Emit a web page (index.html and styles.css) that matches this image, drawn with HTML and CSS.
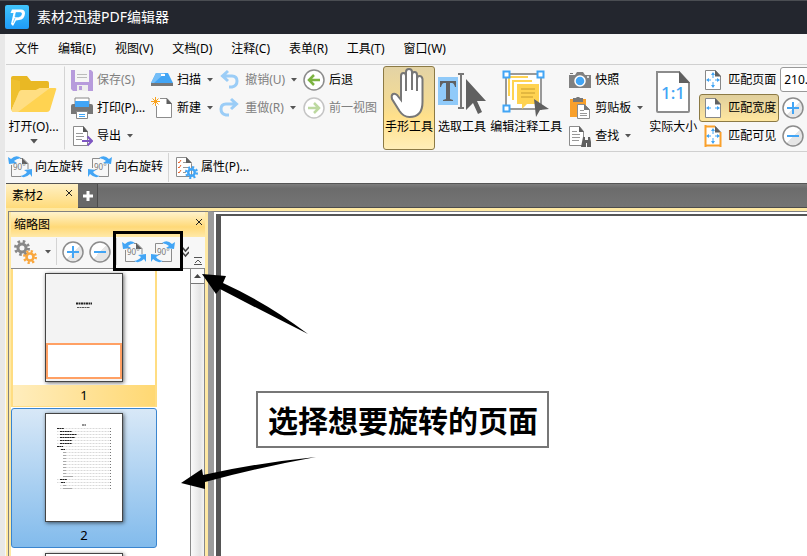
FILE: index.html
```html
<!DOCTYPE html>
<html lang="zh-CN">
<head>
    <meta charset="UTF-8">
    <meta name="viewport" content="width=device-width, initial-scale=1.0">
    <title>素材2迅捷PDF编辑器</title>
    <link rel="stylesheet" href="styles.css">
</head>
<body>
    <!-- Shared icons -->
    <svg class="sprite" aria-hidden="true">
        <symbol id="caret" viewBox="0 0 6 4"><path d="M0 0h6L3 3.6z" fill="currentColor"/></symbol>
        <symbol id="page" viewBox="0 0 18 22">
            <path d="M1.500 1.500h10l5 5.500v13.500h-15z" fill="#fff" stroke="#888"/>
            <path d="M11 1v6.500h6z" fill="#606060"/>
        </symbol>
        <symbol id="zoom-in" viewBox="0 0 22 22">
            <circle cx="11" cy="11" r="10" fill="url(#ring)" stroke="#8c8c8c" stroke-width="1.500"/>
            <path d="M5 11h12M11 5v12" stroke="#42a5f5" stroke-width="2"/>
        </symbol>
        <symbol id="zoom-out" viewBox="0 0 22 22">
            <circle cx="11" cy="11" r="10" fill="url(#ring)" stroke="#8c8c8c" stroke-width="1.500"/>
            <path d="M5 11h12" stroke="#42a5f5" stroke-width="2"/>
        </symbol>
        <symbol id="rotate-left" viewBox="0 0 24 24">
            <path d="M3.500 10v11.500H13M12 3.500h3l5 5V14" fill="none" stroke="#8c8c8c"/>
            <path d="M14 3v6h6z" fill="#606060"/>
            <text x="5" y="15" font-size="8" fill="#777">90°</text>
            <path d="M0 2l1 7 8-1-3-2q2-2 7-3Q8-1 3 4zM24 14l-8 1 3 2q-2 3-7 4 5 3 10-2l2 3z" fill="#42a5f5"/>
        </symbol>
        <symbol id="rotate-right" viewBox="0 0 24 24">
            <path d="M12 3.500H4.500V13M20.500 9v12.500H11" fill="none" stroke="#8c8c8c"/>
            <text x="6" y="15" font-size="8" fill="#777">90°</text>
            <path d="M24 2l-1 7-8-1 3-2q-2-2-7-3 5-4 10 1zM0 14l8 1-3 2q2 3 7 4-5 3-10-2l-2 3z" fill="#42a5f5"/>
        </symbol>
        <symbol id="gear" viewBox="0 0 16 16">
            <circle cx="8" cy="8" r="4" fill="none" stroke="currentColor" stroke-width="3"/>
            <circle cx="8" cy="8" r="6.500" fill="none" stroke="currentColor" stroke-width="3" stroke-dasharray="2.500 2.600"/>
        </symbol>
    </svg>

    <header class="titlebar">
        <svg class="logo" viewBox="0 0 24 24">
            <linearGradient id="logo-bg" x2="0" y2="1"><stop stop-color="#40c4fb"/><stop offset="1" stop-color="#1f9bf8"/></linearGradient>
            <linearGradient id="ring" x1="0" y1="0" x2="1" y2="1"><stop offset="0.5" stop-color="#fff"/><stop offset="0.5" stop-color="#e6e6e6"/></linearGradient>
            <rect width="24" height="24" rx="2" fill="url(#logo-bg)"/>
            <path d="M7 4.500h9q4 0 4 4-.500 6-6 6.500l-3 .500L8 21l-2-2 2.500-11H5.500z" fill="#fff"/>
            <path d="M11 7.500h4.500q1.500 0 1 2-.500 2-3 2.500H10zM10 13l-2 5" fill="#32b0fa" stroke="#32b0fa" stroke-width=".6"/>
        </svg>
        <span>素材2迅捷PDF编辑器</span>
    </header>

    <div class="app">
        <nav class="menubar">
            <button>文件</button>
            <button>编辑(E)</button>
            <button>视图(V)</button>
            <button>文档(D)</button>
            <button>注释(C)</button>
            <button>表单(R)</button>
            <button>工具(T)</button>
            <button>窗口(W)</button>
        </nav>

        <div class="toolbar">
            <button class="big open">
                <svg class="art" width="48" height="42" viewBox="0 0 48 42">
                    <path d="M1 5q0-2 2-2h14l4 5h16q2 0 2 2v18H1z" fill="#e9b824"/>
                    <path d="M1 6v32l9-20V8z" fill="#efc02f"/>
                    <path d="M9 19q1-2 3-2h14l4-2h15q2 0 1 2l-6 20q-1 2-3 2H4q-3 0-2-3z" fill="#ffd351"/>
                    <path d="M9 19q1-2 3-2h14l4-2h10L8 39H4q-3 0-2-3z" fill="#ffde82"/>
                </svg>
                <span>打开(O)...</span>
                <svg class="caret wide"><use href="#caret"/></svg>
            </button>
            <div class="column">
                <button class="tool" disabled>
                    <svg class="icon" viewBox="0 0 22 22">
                        <path d="M0 1h20l2 2v19H2l-2-2z" fill="#b79bdc"/>
                        <path d="M4 1h14v12H4z" fill="#f5f5f5"/><path d="M6 5.500h10M6 8.500h10" stroke="#bbb"/>
                        <path d="M6 16h11v6H6z" fill="#eee"/><path d="M8 17h3v4H8z" fill="#b79bdc"/>
                    </svg>
                    <span>保存(S)</span>
                </button>
                <button class="tool">
                    <svg class="icon" viewBox="0 0 22 22">
                        <path d="M4 1h14v8H4z" fill="#fff" stroke="#888"/>
                        <path d="M2 7h18q2 0 2 2v8H0V9q0-2 2-2z" fill="#777"/>
                        <path d="M4 4h14v6H4z" fill="#42a5f5"/>
                        <path d="M5.500 14.500h11v7h-11z" fill="#fff" stroke="#888"/><path d="M8 17.500h6M8 19.500h6" stroke="#42a5f5"/>
                    </svg>
                    <span>打印(P)...</span>
                </button>
                <button class="tool">
                    <svg class="icon" viewBox="0 0 22 22">
                        <path d="M2.500 1.500h10l4 5v14h-14z" fill="#fff" stroke="#8c8c8c"/><path d="M12 1v6h5z" fill="#555"/>
                        <path d="M5 8.500h7M5 11.500h8M5 14.500h6" stroke="#999"/>
                        <path d="M11 16h9M16.500 11.500L21 16l-4.500 4.500" fill="none" stroke="#7e57c2" stroke-width="2"/>
                    </svg>
                    <span>导出</span><svg class="caret"><use href="#caret"/></svg>
                </button>
            </div>
            <div class="column">
                <button class="tool">
                    <svg class="icon" viewBox="0 0 22 22">
                        <path d="M5 4h12l5 10H0z" fill="#42a5f5"/><path d="M5 4h9L3 14H0z" fill="#74bef8"/>
                        <path d="M10 5h4v2h-4z" fill="#fff"/><path d="M0 14h22v3H0z" fill="#777"/>
                    </svg>
                    <span>扫描</span><svg class="caret"><use href="#caret"/></svg>
                </button>
                <button class="tool">
                    <svg class="icon" viewBox="0 0 22 22">
                        <path d="M9 1.500h7l4.500 5v14h-15V9" fill="#fff" stroke="#8c8c8c"/><path d="M15.500 1v6H21z" fill="#606060"/>
                        <path d="M4.500 0v9M0 4.500h9M1.500 1.500l6 6M7.500 1.500l-6 6" stroke="#f9a11b"/>
                    </svg>
                    <span>新建</span><svg class="caret"><use href="#caret"/></svg>
                </button>
            </div>
            <div class="column">
                <button class="tool" disabled>
                    <svg class="icon" viewBox="0 0 22 22">
                        <path d="M3 7h10q5 0 5 5t-5 6h-3M9 2L3.500 7 9 12" fill="none" stroke="#9bcdf7" stroke-width="3"/>
                    </svg>
                    <span>撤销(U)</span><svg class="caret"><use href="#caret"/></svg>
                </button>
                <button class="tool" disabled>
                    <svg class="icon" viewBox="0 0 22 22">
                        <path d="M17 7H7q-5 0-5 5t5 6h3M12 2l5.500 5-5.500 5" fill="none" stroke="#9bcdf7" stroke-width="3"/>
                    </svg>
                    <span>重做(R)</span><svg class="caret"><use href="#caret"/></svg>
                </button>
            </div>
            <div class="column">
                <button class="tool">
                    <svg class="icon" viewBox="0 0 22 22">
                        <circle cx="11" cy="11" r="10" fill="#fff" stroke="#8c8c8c" stroke-width="1.500"/>
                        <path d="M6 11h11M11 6l-5 5 5 5" fill="none" stroke="#7cb342" stroke-width="2.500"/>
                    </svg>
                    <span>后退</span>
                </button>
                <button class="tool" disabled>
                    <svg class="icon" viewBox="0 0 22 22">
                        <circle cx="11" cy="11" r="10" fill="#fff" stroke="#c4c4c4" stroke-width="1.500"/>
                        <path d="M5 11h11M11 6l5 5-5 5" fill="none" stroke="#bdd9a0" stroke-width="2.500"/>
                    </svg>
                    <span>前一视图</span>
                </button>
            </div>
            <button class="big active">
                <svg class="art" width="40" height="50" viewBox="0 0 40 50">
                    <path d="M12 28V8q0-3 2.500-3T17 8V4q0-3 3-3t3 3v3q0-3 2.500-3T28 7v4q0-3 2.500-3t3 3v23q0 15-13 15-6 0-10-6L3 31q-1-4 1-5 2-1 4 1l4 5z" fill="#fff" stroke="#777" stroke-width="2"/>
                    <path d="M17 8v15M23 6v16M28 9v14" stroke="#777" stroke-width="2"/>
                </svg>
                <span>手形工具</span>
            </button>
            <button class="big">
                <svg class="art" width="50" height="50" viewBox="0 0 50 50">
                    <path d="M1 9h20v28H1z" fill="#90caf9"/>
                    <path d="M3 13h16v6h-1q-1-4-3-4h-2v16l3 1v1H6v-1l3-1V15H7q-2 0-3 4H3z" fill="#606060"/>
                    <path d="M21 6h6M21 40h6M24 6v34" stroke="#777" stroke-width="2"/>
                    <path d="M29 11v31l7-7 5 11 4-2-5-11h9z" fill="#606060"/>
                </svg>
                <span>选取工具</span>
            </button>
            <button class="big">
                <svg class="art" width="50" height="50" viewBox="0 0 50 50">
                    <path d="M5 6h35v35H5z" fill="#fff" stroke="#999" stroke-width="2"/>
                    <path d="M7 8h20v2H9v18H7zM11 12h20v2H13v18h-2z" fill="#ffd351"/>
                    <path d="M16 16h22v20H26l-5 5v-5h-5z" fill="#ffd351"/><path d="M20 21h14M20 25h14M20 29h12" stroke="#c79c30"/>
                    <path d="M2.500 3.500h6v6h-6zM36.500 3.500h6v6h-6zM2.500 37.500h6v6h-6z" fill="#fff" stroke="#42a5f5" stroke-width="2"/>
                    <path d="M33 31l2 18 4-7 9-1z" fill="#606060"/>
                </svg>
                <span>编辑注释工具</span>
            </button>
            <div class="column">
                <button class="tool">
                    <svg class="icon" viewBox="0 0 22 22">
                        <path d="M0 6h6l2-3h6l2 3h6v13H0z" fill="#808080"/><path d="M1 4h3v1H1z" fill="#777"/>
                        <circle cx="11" cy="12" r="5" fill="#42a5f5" stroke="#fff" stroke-width="1.500"/><circle cx="19" cy="8" r="1" fill="#fff"/>
                    </svg>
                    <span>快照</span>
                </button>
                <button class="tool">
                    <svg class="icon" viewBox="0 0 22 22">
                        <path d="M1 2h16v18H1z" fill="#f9a02b"/><path d="M4 1h3q2-3 4 0h3v4H4z" fill="#777"/>
                        <path d="M8.500 7.500h7l5 5v9h-12z" fill="#fff" stroke="#8c8c8c"/><path d="M15 7v6h6z" fill="#777"/>
                        <path d="M11 13.500h4M11 16.500h7M11 18.500h7" stroke="#999"/>
                    </svg>
                    <span>剪贴板</span><svg class="caret"><use href="#caret"/></svg>
                </button>
                <button class="tool">
                    <svg class="icon" viewBox="0 0 22 22">
                        <path d="M.5 1.500h10l4 5v14H.5z" fill="#fff" stroke="#8c8c8c"/><path d="M10 1v6h5z" fill="#606060"/>
                        <path d="M3 6.500h5M3 9.500h8M3 12.500h8M3 15.500h7" stroke="#999"/>
                        <path d="M14 12h2v3h3v-3h2l2 10h-5v-4h-1v4h-5z" fill="#606060"/>
                    </svg>
                    <span>查找</span><svg class="caret"><use href="#caret"/></svg>
                </button>
            </div>
            <button class="big actual">
                <svg class="art" width="36" height="50" viewBox="0 0 36 50">
                    <path d="M2 4h22l10 11v28q0 1-1 1H3q-1 0-1-1z" fill="#fff" stroke="#8c8c8c" stroke-width="2"/>
                    <path d="M24 3v12h11z" fill="#606060"/>
                    <text x="18" y="31" font-size="17" font-weight="500" text-anchor="middle" fill="#42a5f5">1:1</text>
                </svg>
                <span>实际大小</span>
            </button>
            <div class="column fit">
                <button class="tool">
                    <svg class="icon" viewBox="0 0 18 22"><use href="#page" width="18" height="22"/>
                        <path d="M9 4v5M9 13v5M3 11h4M11 11h4" stroke="#42a5f5"/><path d="M7 6l2-3 2 3zM7 16l2 3 2-3zM5 9l-3 2 3 2zM13 9l3 2-3 2z" fill="#42a5f5"/>
                    </svg>
                    <span>匹配页面</span>
                </button>
                <button class="tool active">
                    <svg class="icon" viewBox="0 0 18 22"><use href="#page" width="18" height="22"/>
                        <path d="M3 11h4M11 11h4" stroke="#42a5f5"/><path d="M5 9l-3 2 3 2zM13 9l3 2-3 2z" fill="#42a5f5"/>
                    </svg>
                    <span>匹配宽度</span>
                </button>
                <button class="tool">
                    <svg class="icon" viewBox="0 0 18 22"><use href="#page" width="18" height="22"/>
                        <path d="M1.500 0v22M16.500 7v15M1 20.500h16M1 1.500h10" stroke="#f9a02b" stroke-width="2"/>
                        <path d="M9 4v5M9 13v5M3 11h4M11 11h4" stroke="#42a5f5"/><path d="M7 6l2-3 2 3zM7 16l2 3 2-3zM5 9l-3 2 3 2zM13 9l3 2-3 2z" fill="#42a5f5"/>
                    </svg>
                    <span>匹配可见</span>
                </button>
            </div>
            <div class="column zoom">
                <input type="text" value="210.83%" aria-label="缩放比例">
                <button class="tool"><svg class="icon"><use href="#zoom-in"/></svg><span>放大</span></button>
                <button class="tool"><svg class="icon"><use href="#zoom-out"/></svg><span>缩小</span></button>
            </div>
        </div>

        <div class="subbar">
            <button class="tool"><svg class="icon24"><use href="#rotate-left"/></svg><span>向左旋转</span></button>
            <button class="tool"><svg class="icon24"><use href="#rotate-right"/></svg><span>向右旋转</span></button>
            <i class="divider"></i>
            <button class="tool">
                <svg class="icon24" viewBox="0 0 24 24">
                    <path d="M2.500 2.500h10l5 6v13h-15z" fill="#fff" stroke="#8c8c8c"/><path d="M12 2v6h6z" fill="#606060"/>
                    <path d="M4 7l1 1 2-3M4 12l1 1 2-3M4 17l1 1 2-3" fill="none" stroke="#e8622c"/><path d="M9 7.500h3M9 12.500h6M9 17.500h3" stroke="#999"/>
                    <use href="#gear" x="11" y="11" width="13" height="13" color="#42a5f5"/>
                </svg>
                <span>属性(P)...</span>
            </button>
        </div>

        <div class="tabs">
            <div class="tab">
                <span>素材2</span>
                <button class="close" aria-label="关闭标签"><svg width="6" height="6" viewBox="0 0 6 6"><path d="M0 0l6 6M6 0L0 6" stroke="#222"/></svg></button>
            </div>
            <button class="add" aria-label="新建标签"><svg width="10" height="10" viewBox="0 0 10 10"><path d="M5 0v10M0 5h10" stroke="#fff" stroke-width="3"/></svg></button>
        </div>

        <main class="workspace">
            <aside class="panel">
                <div class="panel-title">
                    <span>缩略图</span>
                    <button class="close" aria-label="关闭面板"><svg width="6" height="6" viewBox="0 0 6 6"><path d="M0 0l6 6M6 0L0 6" stroke="#222"/></svg></button>
                </div>
                <div class="panel-tools">
                    <button aria-label="选项">
                        <svg class="icon24" viewBox="0 0 24 24">
                            <use href="#gear" width="16" height="16" color="#888"/><use href="#gear" x="9" y="10" width="14" height="14" color="#f9a73e"/>
                        </svg>
                        <svg class="caret"><use href="#caret"/></svg>
                    </button>
                    <i class="divider"></i>
                    <button aria-label="放大缩略图"><svg class="icon"><use href="#zoom-in"/></svg></button>
                    <button aria-label="缩小缩略图"><svg class="icon"><use href="#zoom-out"/></svg></button>
                    <i class="divider"></i>
                    <button aria-label="向左旋转"><svg class="icon24"><use href="#rotate-left"/></svg></button>
                    <button aria-label="向右旋转"><svg class="icon24"><use href="#rotate-right"/></svg></button>
                    <button class="more" aria-label="更多">
                        <svg width="7" height="12" viewBox="0 0 7 12"><path d="M0 1l3.500 4L7 1M0 6l3.500 4L7 6" fill="none" stroke="#444" stroke-width="1.500"/></svg>
                    </button>
                    <button class="collapse" aria-label="收起">
                        <svg width="8" height="8" viewBox="0 0 8 8"><path d="M0 .5h8M0 7.500h8M1 6l3-3 3 3" fill="none" stroke="#555"/></svg>
                    </button>
                </div>
                <div class="panel-body">
                    <div class="thumbs">
                        <figure class="thumb current">
                            <svg class="sheet" viewBox="0 0 76 107">
                                <path d="M0 0h76v107H0z" fill="#f3f3f3"/>
                                <path d="M30 29.500h16" stroke="#222" stroke-width="2" stroke-dasharray="2 .5"/><path d="M31 33.500h13" stroke="#555" stroke-dasharray="2 .5"/>
                                <path d="M1 70h74v34H1z" fill="#fff" stroke="#ffa064" stroke-width="2"/>
                            </svg>
                            <figcaption>1</figcaption>
                        </figure>
                        <figure class="thumb selected">
                            <svg class="sheet" viewBox="0 0 76 107">
                                <path d="M0 0h76v107H0z" fill="#fff"/>
                                <path d="M11 14.500h53M11 17.500h53M11 20.500h53M11 23.500h53M11 26.500h53M11 29.500h53M11 32.500h53M14 35.500h50M17 38.500h47M17 41.500h47M17 44.500h47M17 47.500h47M17 50.500h47M17 53.500h47M17 56.500h47M17 59.500h47M17 62.500h47M11 65.500h53M11 68.500h53M14 71.500h50M14 74.500h50" stroke="#c8c8c8" stroke-width=".7" stroke-dasharray="1 .5"/>
                                <path d="M64.500 14v61" stroke="#777" stroke-dasharray="1 2"/>
                                <path d="M17 38.500h3M17 41.500h3M17 44.500h3M17 47.500h3M17 50.500h3M17 53.500h3M17 56.500h3M17 59.500h3M17 62.500h10M17 71.500h3M17 74.500h9" stroke="#aaa"/>
                                <path d="M36 11h4M11 14.500h7M14 17.500h12M14 20.500h17M14 23.500h15M14 26.500h12M14 29.500h12M11 32.500h6M15 35.500h4M14 65.500h7M15 68.500h4" stroke="#222" stroke-dasharray="2 .4"/>
                            </svg>
                            <figcaption>2</figcaption>
                        </figure>
                        <figure class="thumb">
                            <svg class="sheet" viewBox="0 0 76 107"><path d="M0 0h76v107H0z" fill="#fff"/></svg>
                        </figure>
                    </div>
                    <div class="scrollbar">
                        <button aria-label="向上滚动"><svg width="7" height="4" viewBox="0 0 7 4"><path d="M0 4h7L3.500 0z" fill="#444"/></svg></button>
                        <div class="handle"></div>
                    </div>
                </div>
            </aside>
            <section class="document"></section>
        </main>
    </div>

    <!-- Guide marks drawn over the window -->
    <div class="mark-box"></div>
    <svg class="mark-arrows" width="330" height="500" viewBox="0 0 330 500">
        <path d="M202 274l24 2-3 7q44 20 85 51-42-21-88-45l-4 5z"/>
        <path d="M181 483l21-14 1 6q54-12 113-18-60 11-111 25v7z"/>
    </svg>
    <p class="callout">选择想要旋转的页面</p>
</body>
</html>
```
FILE: styles.css
```css
* {
    box-sizing: border-box;
}
body {
    margin: 0;
    height: 100vh;
    display: flex;
    flex-direction: column;
    overflow: hidden;
    position: relative;
    background: #e8e8e8;
    color: #000;
    font: 12px/16px "Noto Sans", "Noto Sans CJK SC", sans-serif;
}
button {
    display: flex;
    align-items: center;
    flex: none;
    margin: 0;
    padding: 0;
    border: 0;
    background: none;
    color: inherit;
    font: inherit;
    white-space: nowrap;
}
button:disabled {
    color: #808080;
}
svg {
    display: block;
    flex: none;
}
.sprite {
    display: none;
}
.icon {
    width: 22px;
    height: 22px;
}
.icon24 {
    width: 24px;
    height: 24px;
}
.caret {
    width: 6px;
    height: 4px;
    margin-left: 2px;
    color: #555;
}
.divider {
    width: 1px;
    align-self: stretch;
    background: #d4d4d4;
}

.titlebar {
    flex: none;
    display: flex;
    align-items: center;
    gap: 8px;
    height: 34px;
    padding: 0 0 2px 5px;
    background: #23262e;
    border-top: 1px solid #4a4d52;
    color: #fff;
    font-size: 14px;
}
.logo {
    width: 24px;
    height: 24px;
}

.app {
    flex: 1;
    min-height: 0;
    display: flex;
    flex-direction: column;
    margin-left: 5px;
    border-left: 1px solid #f7f7f7;
    background: #f7f7f7;
}
.menubar {
    flex: none;
    display: flex;
    gap: 19px;
    height: 31px;
    padding-left: 9px;
    border-bottom: 1px solid #d0d0d0;
}

.toolbar {
    flex: none;
    display: flex;
    height: 87px;
    padding: 1px 0;
    border-bottom: 1px solid #d0d0d0;
    overflow: hidden;
}
.column {
    flex: none;
    display: flex;
    flex-direction: column;
    margin-left: 6px;
}
.tool {
    height: 28px;
    gap: 4px;
}
.big {
    flex-direction: column;
    margin-left: 1px;
    padding-top: 1px;
    border: 1px solid transparent;
    border-radius: 3px;
}
.big .art {
    margin-bottom: 1px;
}
.big.open {
    width: 59px;
    margin-left: 0;
    padding-right: 4px;
    border-right-color: #d4d4d4;
    border-radius: 0;
}
.big.open .art {
    margin-top: 5px;
    margin-bottom: 4px;
}
.caret.wide {
    width: 8px;
    height: 5px;
    margin: 4px 0 0;
}
.active {
    border: 1px solid #8c7a45;
    border-radius: 3px;
    background: linear-gradient(#e3d3a5, #f6dc92 50%, #ffe08a 60%, #ffeeb8);
}
.big.active {
    width: 52px;
    margin-left: 6px;
}
.big.actual {
    margin-left: 5px;
}
.fit {
    margin-left: 1px;
}
.fit .tool {
    padding: 0 2px 0 4px;
    gap: 6px;
    border: 1px solid transparent;
}
.fit .icon {
    width: 18px;
}
.fit .tool.active {
    border-color: #8c7a45;
    background: linear-gradient(#e0cf9d, #ffe79f);
}
.zoom {
    margin-left: 1px;
}
.zoom .tool {
    margin-left: 2px;
    color: #c4621c;
}
.zoom input {
    width: 70px;
    height: 25px;
    margin: 1px 0 2px;
    padding: 0 3px;
    border: 1px solid #999;
    border-radius: 3px;
    background: #fff;
    font: inherit;
}

.subbar {
    flex: none;
    display: flex;
    gap: 5px;
    height: 31px;
    padding: 1px 2px;
}
.subbar .tool {
    gap: 3px;
}

.tabs {
    flex: none;
    display: flex;
    height: 25px;
    border-top: 1px solid #555;
    border-bottom: 1px solid #4c4c4c;
    background: linear-gradient(#7d7d7d, #6c6c6c 20%, #747474);
}
.tab {
    display: flex;
    justify-content: space-between;
    width: 72px;
    height: 24px;
    padding: 4px 6px;
    background: linear-gradient(#fff0c4, #ffdb7a);
}
.close {
    height: 9px;
}
.add {
    justify-content: center;
    width: 20px;
    border-right: 1px solid #4c4c4c;
    background: #686868;
}

.workspace {
    flex: 1;
    min-height: 0;
    display: flex;
    padding: 3px 0 0 2px;
    background: #ffe9a3;
}
.panel {
    flex: none;
    display: flex;
    flex-direction: column;
    width: 200px;
    padding: 0 3px 0 2px;
    border: 1px solid #808080;
    border-bottom: 0;
    border-right: 0;
    background: #ffe9a3;
}
.panel-title {
    flex: none;
    display: flex;
    justify-content: space-between;
    height: 25px;
    padding: 5px 3px;
    background: linear-gradient(#fff3cc, #ffd978 60%, #ffe9a8);
}
.panel-tools {
    flex: none;
    display: flex;
    align-items: center;
    gap: 5px;
    height: 32px;
    padding: 1px 0 3px 3px;
    border-bottom: 1px solid #888;
    background: #f7f7f7;
    overflow: hidden;
}
.panel-tools .caret {
    margin-left: 7px;
}
.more {
    margin-left: 2px;
}
.collapse {
    align-self: flex-end;
}
.panel-body {
    flex: 1;
    min-height: 0;
    display: flex;
    background: #fff;
}
.thumbs {
    flex: 1;
    overflow: hidden;
}
.thumb {
    display: flex;
    flex-direction: column;
    align-items: center;
    width: 146px;
    height: 140px;
    margin: 0;
    padding-top: 4px;
    border: 1px solid transparent;
    border-radius: 3px;
}
.sheet {
    width: 78px;
    height: 109px;
    border: 1px solid #444;
    box-shadow: 1px 1px 4px rgba(0, 0, 0, 0.6);
}
.thumb figcaption {
    align-self: stretch;
    margin-top: 3px;
    padding: 2px 0;
    font-size: 13px;
    text-align: center;
}
.thumb.current {
    height: 138px;
    margin-bottom: 1px;
    border: solid #ffdd82;
    border-width: 0 2px 1px;
    border-radius: 0;
}
.thumb.current figcaption {
    flex: 1;
    background: linear-gradient(90deg, #ffedbd, #ffd873);
}
.thumb.selected {
    border-color: #3a85cf;
    background: linear-gradient(#d8e8f7, #82bbec);
}
.scrollbar {
    flex: none;
    display: flex;
    flex-direction: column;
    width: 15px;
    border: solid #888;
    border-width: 0 1px;
}
.scrollbar button {
    justify-content: center;
    height: 15px;
    border-bottom: 1px solid #777;
    background: #fafafa;
}
.handle {
    flex: 1;
    background: linear-gradient(90deg, #fafafa, #e4e4e4 70%, #f4f4f4);
}
.document {
    flex: 1;
    border-left: 6px solid #9b9b9b;
    border-top: 1px solid #808080;
    background: #fff;
    box-shadow: inset 2px 2px #fff, inset 7px 4px #555;
}

/* guide marks */
.mark-box {
    position: absolute;
    left: 113px;
    top: 231px;
    width: 70px;
    height: 40px;
    border: 3px solid #000;
}
.mark-arrows {
    position: absolute;
    left: 0;
    top: 0;
    pointer-events: none;
}
.callout {
    position: absolute;
    left: 256px;
    top: 391px;
    margin: 0;
    padding: 7px 9px 8px 10px;
    border: 2px solid #777;
    background: #fff;
    font-family: "Noto Sans CJK SC", sans-serif;
    font-size: 30px;
    font-weight: bold;
    line-height: 38px;
    white-space: nowrap;
}
```
